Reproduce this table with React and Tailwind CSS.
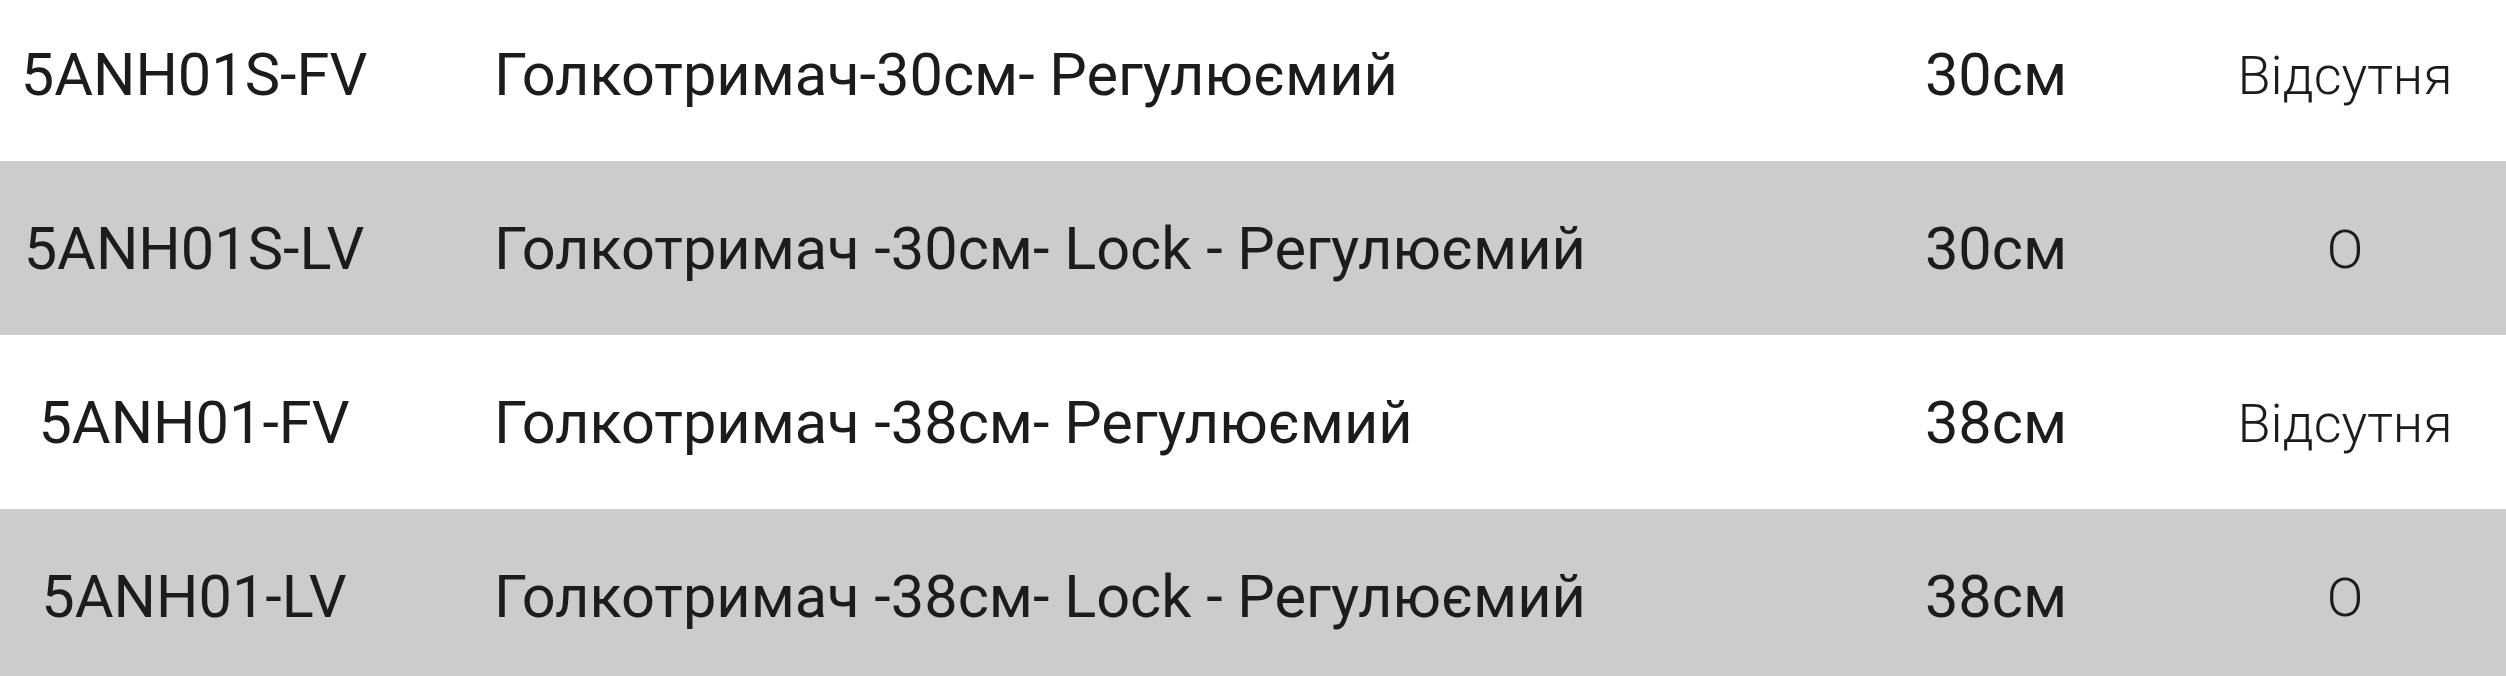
import React from "react";

const rows = [
  { code: "5ANH01S-FV", name: "Голкотримач-30см- Регулюємий", len: "30см", val: "Відсутня", gray: false },
  { code: "5ANH01S-LV", name: "Голкотримач -30см- Lock - Регулюємий", len: "30см", val: "О", gray: true },
  { code: "5ANH01-FV", name: "Голкотримач -38см- Регулюємий", len: "38см", val: "Відсутня", gray: false },
  { code: "5ANH01-LV", name: "Голкотримач -38см- Lock - Регулюємий", len: "38см", val: "О", gray: true },
];

export default function App() {
  return (
    <div
      className="w-[2506px] h-[676px] overflow-hidden bg-white text-[#1c1c1c]"
      style={{ fontFamily: "Roboto, 'Noto Sans', sans-serif" }}
    >
      <div className="-mt-[13px] flex flex-col">
        {rows.map((r, i) => (
          <div
            key={i}
            className={`grid grid-cols-[388px_1420px_376px_322px] items-center h-[174px] pt-[3px] ${r.gray ? "bg-[#cccccc]" : "bg-white"}`}
          >
            <div className="text-center text-[59.5px] leading-none whitespace-nowrap">{r.code}</div>
            <div className="pl-[106px] text-[59.5px] leading-none whitespace-nowrap">{r.name}</div>
            <div className="text-center text-[59.5px] leading-none whitespace-nowrap">{r.len}</div>
            <div className="text-center text-[54px] font-light leading-none whitespace-nowrap">{r.val}</div>
          </div>
        ))}
      </div>
    </div>
  );
}
